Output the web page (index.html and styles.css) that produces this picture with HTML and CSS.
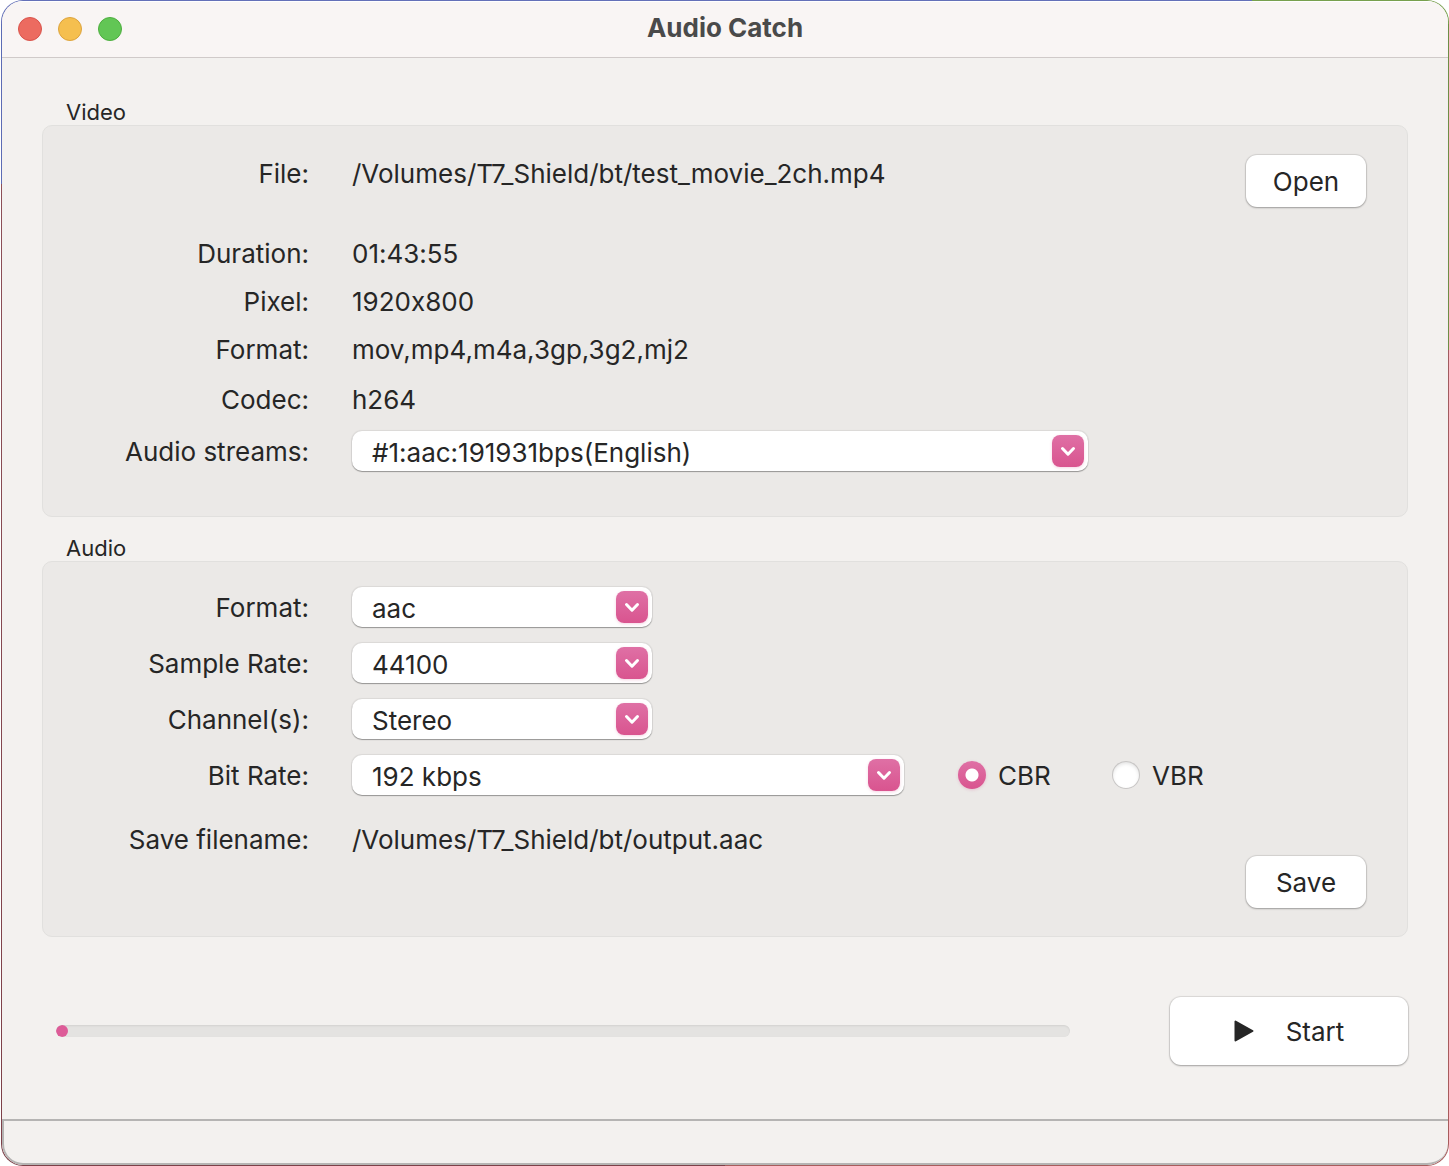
FILE: index.html
```html
<!DOCTYPE html>
<html lang="en">
<head>
<meta charset="utf-8">
<title>Audio Catch</title>
<link rel="stylesheet" href="styles.css">
</head>
<body>
<svg class="sprite" aria-hidden="true">
  <symbol id="chevron" viewBox="0 0 32 32"><path d="M10.5 13.5 16 19.2l5.5-5.7" fill="none" stroke="#fff" stroke-width="3" stroke-linecap="round" stroke-linejoin="round"/></symbol>
</svg>
<div class="frame">
<div class="window">
  <header class="titlebar">
    <div class="lights">
      <button class="light light-close" aria-label="Close"></button>
      <button class="light light-min" aria-label="Minimize"></button>
      <button class="light light-zoom" aria-label="Zoom"></button>
    </div>
    <h1 class="title">Audio Catch</h1>
  </header>

  <main class="content">
    <section>
      <h2 class="group-title">Video</h2>
      <div class="panel panel-video">
        <div class="row row-file">
          <span class="label">File:</span>
          <span class="value">/Volumes/T7_Shield/bt/test_movie_2ch.mp4</span>
          <button class="button">Open</button>
        </div>
        <div class="row">
          <span class="label">Duration:</span>
          <span class="value">01:43:55</span>
        </div>
        <div class="row">
          <span class="label">Pixel:</span>
          <span class="value">1920x800</span>
        </div>
        <div class="row">
          <span class="label">Format:</span>
          <span class="value">mov,mp4,m4a,3gp,3g2,mj2</span>
        </div>
        <div class="row row-tall">
          <span class="label">Codec:</span>
          <span class="value">h264</span>
        </div>
        <div class="row row-tall">
          <label class="label" for="streams">Audio streams:</label>
          <span class="dropdown dropdown-wide">
            <select id="streams"><option>#1:aac:191931bps(English)</option></select>
            <svg class="arrow"><use href="#chevron"/></svg>
          </span>
        </div>
      </div>
    </section>

    <section>
      <h2 class="group-title">Audio</h2>
      <div class="panel panel-audio">
        <div class="row row-option">
          <label class="label" for="format">Format:</label>
          <span class="dropdown">
            <select id="format"><option>aac</option></select>
            <svg class="arrow"><use href="#chevron"/></svg>
          </span>
        </div>
        <div class="row row-option">
          <label class="label" for="rate">Sample Rate:</label>
          <span class="dropdown">
            <select id="rate"><option>44100</option></select>
            <svg class="arrow"><use href="#chevron"/></svg>
          </span>
        </div>
        <div class="row row-option">
          <label class="label" for="channels">Channel(s):</label>
          <span class="dropdown">
            <select id="channels"><option>Stereo</option></select>
            <svg class="arrow"><use href="#chevron"/></svg>
          </span>
        </div>
        <div class="row row-option">
          <label class="label" for="bitrate">Bit Rate:</label>
          <span class="dropdown dropdown-medium">
            <select id="bitrate"><option>192 kbps</option></select>
            <svg class="arrow"><use href="#chevron"/></svg>
          </span>
          <div class="modes">
            <label class="mode"><input type="radio" name="mode" checked>CBR</label>
            <label class="mode"><input type="radio" name="mode">VBR</label>
          </div>
        </div>
        <div class="row row-save">
          <span class="label">Save filename:</span>
          <span class="value">/Volumes/T7_Shield/bt/output.aac</span>
          <button class="button button-save">Save</button>
        </div>
      </div>
    </section>

    <div class="actions">
      <progress class="progress" max="100" value="0" aria-label="Conversion progress"></progress>
      <button class="button button-start">
        <svg class="play" viewBox="0 0 20 22" aria-hidden="true"><path d="M1.5 1.5v19L18.5 11z" fill="#262626" stroke="#262626" stroke-width="2" stroke-linejoin="round"/></svg>
        Start
      </button>
    </div>
  </main>
  <footer class="statusbar"></footer>
</div>
</div>
</body>
</html>
```
FILE: styles.css
```css
* { box-sizing: border-box; }

body {
  margin: 0;
  background: #fff;
  color: #262626;
  font: 26px/40px Inter, "Liberation Sans", sans-serif;
  font-feature-settings: "calt" 0;
}

button, select, input {
  margin: 0;
  color: inherit;
  font: inherit;
  font-feature-settings: inherit;
}

.sprite { display: none; }

.frame {
  display: flex;
  min-height: 100vh;
  margin-left: 1px;
  padding: 1px;
  border-radius: 22px;
  background:
    linear-gradient(90deg, #6470b8 1251px, #78a04e 1251px) top / 100% 24px no-repeat,
    linear-gradient(#5c6cb4 184px, #8c5058 184px, #7c4048) left / 50% 100% no-repeat,
    linear-gradient(#6e8e46 350px, #a05c60 350px, #a85c5c) right / 50% 100% no-repeat;
}

.window {
  display: flex;
  flex: 1;
  flex-direction: column;
  overflow: hidden;
  border-radius: 21px;
  background: #f3f1ef;
}

.titlebar {
  display: grid;
  grid-template-columns: 1fr auto 1fr;
  align-items: center;
  height: 57px;
  padding: 0 16px 2px;
  border-top: 1px solid #fff;
  border-bottom: 1px solid #d0cac9;
  background: #f9f5f4;
}

.lights {
  display: flex;
  gap: 16px;
}

.light {
  width: 24px;
  height: 24px;
  padding: 0;
  border: 1px solid;
  border-radius: 50%;
}

.light-close { border-color: #d9534b; background: #ec6b60; }
.light-min { border-color: #dca33d; background: #f5bf4f; }
.light-zoom { border-color: #4dae3e; background: #62c655; }

.title {
  margin: 0;
  padding-bottom: 2px;
  color: #4a4a4a;
  font-size: 26px;
  font-weight: 700;
}

.content {
  flex: 1;
  padding: 37px 40px 0;
}

.group-title {
  margin: 0;
  padding: 4px 24px 0;
  font-size: 22px;
  font-weight: 400;
  line-height: 26px;
}

.panel {
  margin-bottom: 14px;
  border: 1px solid #e1e0de;
  border-radius: 10px;
  background: #ebe9e7;
}

.panel-video { padding: 28px 41px 38px 0; }
.panel-audio { padding: 18px 41px 28px 0; }

.row {
  display: flex;
  align-items: center;
  min-height: 48px;
}

.row-tall { min-height: 52px; }
.row-option { min-height: 56px; }

.row-file {
  align-items: flex-start;
  min-height: 76px;
}

.row-save {
  align-items: flex-start;
  min-height: 104px;
  padding-top: 16px;
}

.label {
  flex: 0 0 266px;
  margin-right: 43px;
  text-align: right;
}

.value { flex: 1; }

.button {
  width: 120px;
  height: 52px;
  margin-top: 1px;
  padding: 2px 0 0;
  border: 0;
  border-radius: 11px;
  background: #fff;
  box-shadow: 0 0 1px 1px #0000001a, 0 1px 2px #00000040;
}

.button-save { align-self: flex-end; }

.dropdown {
  position: relative;
  flex: 0 1 300px;
  margin-bottom: 2px;
}

.dropdown-medium { flex-basis: 552px; }
.dropdown-wide { flex-basis: 736px; }

.dropdown select {
  display: block;
  width: 100%;
  height: 40px;
  padding: 2px 44px 0 20px;
  border: 0;
  border-radius: 10px;
  appearance: none;
  background: #fff;
  box-shadow: 0 0 1px 1px #00000012, 0 1px 1px #00000050;
}

.arrow {
  position: absolute;
  top: 4px;
  right: 4px;
  width: 32px;
  height: 32px;
  border-radius: 8px;
  background: linear-gradient(#df70a5, #d9548f);
  box-shadow: 0 1px 3px #d9548f40;
  pointer-events: none;
}

.modes {
  display: flex;
  margin-left: 54px;
}

.mode {
  display: flex;
  align-items: center;
  gap: 12px;
  min-width: 154px;
}

.mode input {
  width: 28px;
  height: 28px;
  margin-bottom: 2px;
  border-radius: 50%;
  appearance: none;
  background: #fff;
  box-shadow: inset 0 0 0 1px #c8c6c5, inset 0 2px 4px #00000026;
}

.mode input:checked {
  background: radial-gradient(circle, #fff 6px, transparent 7px), linear-gradient(#df70a5, #d9548f);
  box-shadow: 0 1px 3px #d9548f40;
}

.actions {
  display: flex;
  align-items: center;
  gap: 100px;
  padding: 46px 0 0 14px;
}

.progress {
  flex: 1;
  height: 12px;
  border: 0;
  border-radius: 6px;
  overflow: hidden;
  appearance: none;
  background: #e4e3e1;
}

.progress::-webkit-progress-bar {
  border-radius: 6px;
  background: #e4e3e1;
  box-shadow: inset 0 1px 2px #00000014;
}

.progress::-webkit-progress-value {
  min-width: 12px;
  border-radius: 6px;
  background: #dd5c98;
}

.button-start {
  display: flex;
  align-items: center;
  justify-content: center;
  gap: 32px;
  width: 238px;
  height: 68px;
  margin-top: 0;
}

.play {
  width: 20px;
  height: 22px;
  margin-bottom: 2px;
}

.statusbar {
  height: 46px;
  border: 2px solid #b5b4b3;
  border-right: 0;
  border-radius: 0 0 21px 21px;
}
```
